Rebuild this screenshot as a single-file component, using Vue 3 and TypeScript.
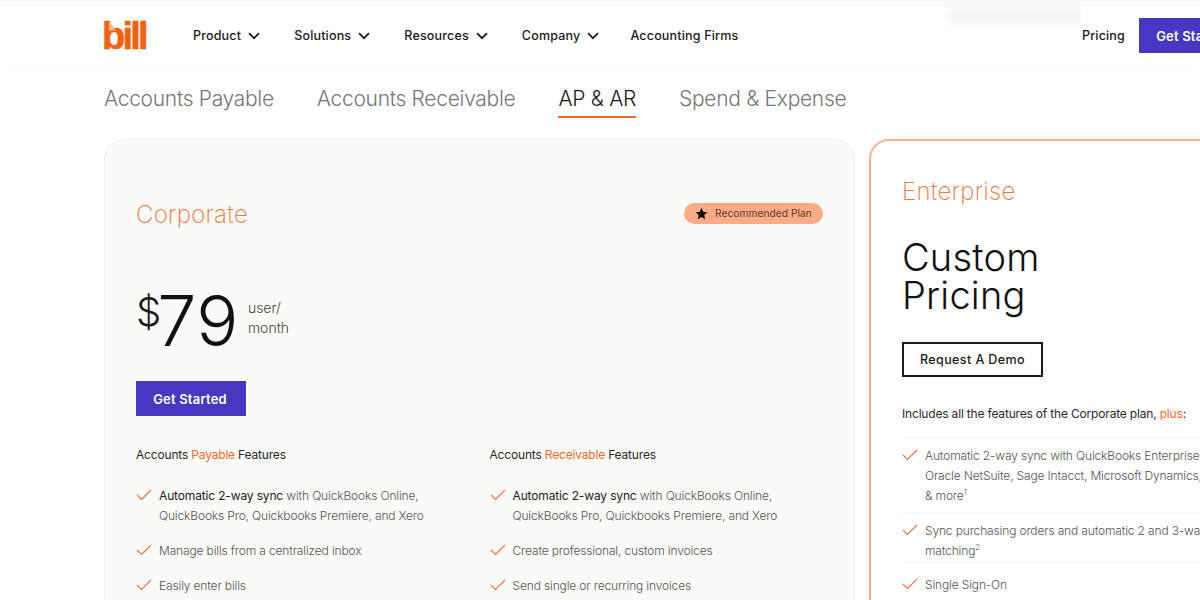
<script setup lang="ts">
const navItems = ['Product', 'Solutions', 'Resources', 'Company']
const tabs = ['Accounts Payable', 'Accounts Receivable', 'AP & AR', 'Spend & Expense']
const columns = [
  { pre: 'Accounts ', hi: 'Payable', rest: ['Manage bills from a centralized inbox', 'Easily enter bills'] },
  { pre: 'Accounts ', hi: 'Receivable', rest: ['Create professional, custom invoices', 'Send single or recurring invoices'] },
]
</script>

<template>
  <div class="page">
    <div class="blur-strip"></div>
    <header class="nav">
      <div class="logo"><span class="logo-text">bill</span><span class="logo-fold"></span></div>
      <nav class="menu">
        <a v-for="item in navItems" :key="item" class="menu-item">
          {{ item }}
          <svg width="12" height="8" viewBox="0 0 12 8"><path d="M1 1.2 6 6.2 11 1.2" fill="none" stroke="#1a1a1a" stroke-width="1.7" /></svg>
        </a>
        <a class="menu-item firms">Accounting Firms</a>
      </nav>
      <div class="nav-right">
        <a class="menu-item">Pricing</a>
        <a class="btn nav-btn">Get Started</a>
      </div>
    </header>

    <div class="tabs">
      <span v-for="t in tabs" :key="t" class="tab" :class="{ active: t === 'AP & AR' }">{{ t }}</span>
    </div>

    <div class="cards">
      <section class="card corporate">
        <div class="card-head">
          <h2 class="plan">Corporate</h2>
          <span class="badge">
            <svg width="13" height="13" viewBox="0 0 24 24"><path d="M12 1.5l3.2 7.2 7.8.8-5.9 5.2 1.7 7.7L12 18.4l-6.8 4 1.7-7.7L1 9.5l7.8-.8z" fill="#111" /></svg>
            Recommended Plan
          </span>
        </div>
        <div class="price">
          <span class="cur">$</span><span class="amt">79</span>
          <span class="per">user/<br />month</span>
        </div>
        <a class="btn cta">Get Started</a>
        <div class="cols">
          <div v-for="c in columns" :key="c.hi" class="col">
            <h3 class="col-title">{{ c.pre }}<em>{{ c.hi }}</em> Features</h3>
            <ul class="list">
              <li class="item">
                <svg class="check" width="16" height="12" viewBox="0 0 16 12"><path d="M1 6l4.5 4.5L15 1" fill="none" stroke="#f0703c" stroke-width="1.1" /></svg>
                <span><b>Automatic 2-way sync</b> with QuickBooks Online,<br />QuickBooks Pro, Quickbooks Premiere, and Xero</span>
              </li>
              <li v-for="r in c.rest" :key="r" class="item">
                <svg class="check" width="16" height="12" viewBox="0 0 16 12"><path d="M1 6l4.5 4.5L15 1" fill="none" stroke="#f0703c" stroke-width="1.1" /></svg>
                <span>{{ r }}</span>
              </li>
            </ul>
          </div>
        </div>
      </section>

      <section class="card enterprise">
        <h2 class="plan ent-plan">Enterprise</h2>
        <div class="custom">Custom<br />Pricing</div>
        <a class="demo">Request A Demo</a>
        <p class="includes">Includes all the features of the Corporate plan, <em>plus</em>:</p>
        <ul class="list ent-list">
          <li class="item ruled">
            <svg class="check" width="16" height="12" viewBox="0 0 16 12"><path d="M1 6l4.5 4.5L15 1" fill="none" stroke="#f0703c" stroke-width="1.1" /></svg>
            <span>Automatic 2-way sync with QuickBooks Enterprise,<br />Oracle NetSuite, Sage Intacct, Microsoft Dynamics,<br />&amp; more<sup>1</sup></span>
          </li>
          <li class="item ruled">
            <svg class="check" width="16" height="12" viewBox="0 0 16 12"><path d="M1 6l4.5 4.5L15 1" fill="none" stroke="#f0703c" stroke-width="1.1" /></svg>
            <span>Sync purchasing orders and automatic 2 and 3-way<br />matching<sup>2</sup></span>
          </li>
          <li class="item ruled">
            <svg class="check" width="16" height="12" viewBox="0 0 16 12"><path d="M1 6l4.5 4.5L15 1" fill="none" stroke="#f0703c" stroke-width="1.1" /></svg>
            <span>Single Sign-On</span>
          </li>
        </ul>
      </section>
    </div>
  </div>
</template>

<style>
html, body { margin: 0; background: #fff; overflow: hidden; }
</style>

<style scoped>
.page {
  position: relative;
  width: 1200px;
  height: 600px;
  overflow: hidden;
  background: #fff;
  font-family: Inter, "Noto Sans", sans-serif;
  color: #1a1a1a;
}
.blur-strip {
  position: absolute;
  left: 948px;
  top: 8px;
  width: 132px;
  height: 16px;
  background: #f4f4f3;
  filter: blur(4px);
}
.nav {
  display: flex;
  align-items: center;
  height: 61px;
  padding: 5px 0 0 104px;
  box-shadow: 0 1px 3px rgba(0, 0, 0, 0.02);
  background: linear-gradient(#fafafa 0, #fafafa 7px, #fff 7px);
}
.logo {
  position: relative;
  width: 42px;
  height: 30px;
  margin-right: 47px;
}
.logo-text {
  display: block;
  font-family: "Liberation Sans", sans-serif;
  font-weight: 700;
  font-size: 38px;
  line-height: 30px;
  color: #f4610f;
  letter-spacing: -2.8px;
  margin-left: -2px;
  -webkit-text-stroke: 0.6px #f4610f;
}
.logo-fold {
  position: absolute;
  left: 5px;
  top: 1px;
  width: 7px;
  height: 9px;
  background: #fbb27e;
  clip-path: polygon(0 0, 100% 100%, 0 100%);
}
.menu { display: flex; align-items: center; gap: 34px; }
.menu-item {
  display: flex;
  align-items: center;
  gap: 7px;
  font-size: 12.5px;
  font-weight: 500;
  letter-spacing: 0.18px;
  white-space: nowrap;
}
.firms { margin-left: -3px; }
.nav-right {
  display: flex;
  align-items: center;
  gap: 14px;
  margin-left: auto;
  flex: none;
}
.btn {
  display: flex;
  align-items: center;
  justify-content: center;
  box-sizing: border-box;
  padding-right: 2px;
  background: #4737c2;
  color: #fff;
  font-size: 13px;
  font-weight: 600;
  letter-spacing: 0.2px;
  white-space: nowrap;
}
.nav-btn { width: 110px; height: 35px; margin-right: -49px; }
.tabs {
  display: flex;
  gap: 43px;
  padding: 17px 0 0 104px;
  height: 57px;
  box-sizing: border-box;
  margin-bottom: 16px;
}
.tab {
  height: 35px;
  font-size: 21px;
  font-weight: 300;
  line-height: 32px;
  color: #777;
  letter-spacing: -0.3px;
  white-space: nowrap;
  box-sizing: border-box;
}
.tab.active { color: #1a1a1a; border-bottom: 2px solid #ef6a2c; }
.cards {
  display: flex;
  gap: 14px;
  padding-left: 104px;
  align-items: flex-start;
}
.card {
  flex: none;
  box-sizing: border-box;
  height: 620px;
  border-radius: 20px;
}
.corporate {
  width: 751px;
  background: #fafaf9;
  border: 1px solid #efefed;
  padding: 59px 31px 0;
}
.enterprise {
  width: 420px;
  background: #fff;
  border: 2px solid #f7b28f;
  padding: 35px 31px 0;
}
.card-head {
  display: flex;
  align-items: center;
  justify-content: space-between;
  height: 32px;
}
.plan {
  margin: 0;
  font-size: 24px;
  font-weight: 200;
  line-height: 32px;
  letter-spacing: 0.3px;
  color: #f0763c;
}
.badge {
  display: flex;
  align-items: center;
  gap: 7px;
  height: 21px;
  width: 139px;
  box-sizing: border-box;
  padding-left: 11px;
  margin-top: -4px;
  border-radius: 11px;
  background: #fbab85;
  color: #5a3a2a;
  font-size: 10.2px;
  letter-spacing: 0.05px;
  white-space: nowrap;
}
.price {
  display: flex;
  align-items: flex-start;
  height: 70px;
  margin-top: 58px;
}
.cur {
  font-size: 40px;
  font-weight: 300;
  line-height: 46px;
}
.amt {
  font-size: 70px;
  font-weight: 300;
  line-height: 64px;
  letter-spacing: 0.5px;
  margin-left: -4px;
  color: #111;
}
.per {
  margin: 9px 0 0 9px;
  font-size: 14px;
  font-weight: 300;
  line-height: 20px;
  color: #444;
}
.cta { width: 110px; height: 35px; margin-top: 22px; }
.cols { display: flex; margin-top: 29px; }
.col { width: 353.5px; flex: none; }
.col-title {
  margin: 0 0 21px;
  font-size: 12px;
  font-weight: 400;
  line-height: 20px;
  letter-spacing: -0.18px;
  color: #2a2a2a;
}
em { font-style: normal; color: #ef6a2c; }
.list { list-style: none; margin: 0; padding: 0; }
.item {
  display: flex;
  gap: 7px;
  font-size: 12px;
  font-weight: 300;
  line-height: 20px;
  letter-spacing: -0.15px;
  color: #555;
  padding-bottom: 15px;
  white-space: nowrap;
}
.item b { font-weight: 400; color: #222; }
.check { flex: none; margin-top: 3px; }
.custom {
  margin-top: 30px;
  font-size: 38px;
  font-weight: 300;
  line-height: 38px;
  color: #111;
  letter-spacing: 0.2px;
}
.demo {
  display: flex;
  align-items: center;
  justify-content: center;
  width: 141px;
  height: 35px;
  margin-top: 28px;
  box-sizing: border-box;
  border: 2px solid #1a1a1a;
  font-size: 12.5px;
  font-weight: 500;
  letter-spacing: 0.4px;
}
.includes {
  margin: 27px 0 0;
  font-size: 12px;
  font-weight: 400;
  line-height: 20px;
  letter-spacing: -0.18px;
  color: #2a2a2a;
  white-space: nowrap;
}
.ent-list { margin-top: 13px; }
.item.ruled {
  padding: 8px 0 6px;
  border-top: 1px solid #f5f5f4;
}
.item.ruled:nth-child(2) { padding-bottom: 1px; }
.item.ruled:nth-child(3) { padding-top: 12px; }
sup { font-size: 8px; line-height: 0; }
</style>
